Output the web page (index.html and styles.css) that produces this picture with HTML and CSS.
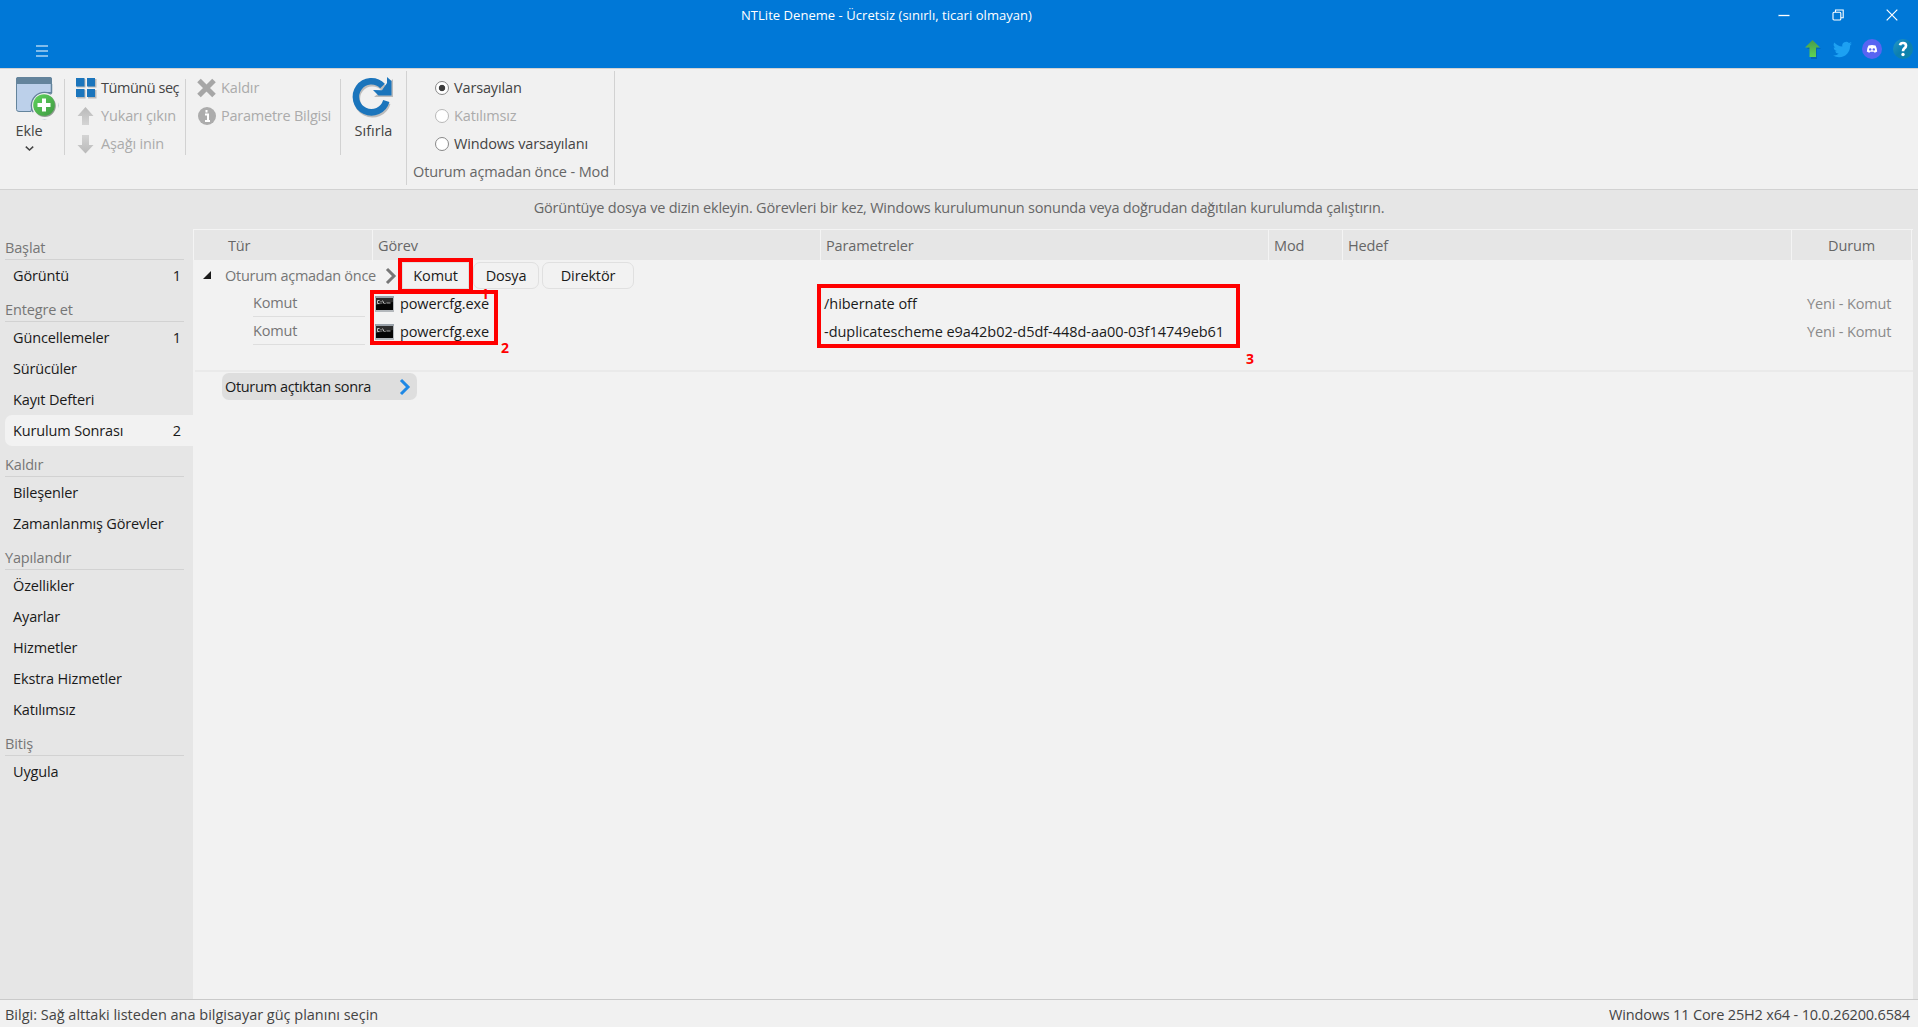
FILE: index.html
```html
<!DOCTYPE html>
<html lang="tr">
<head>
<meta charset="utf-8">
<title>NTLite</title>
<link rel="stylesheet" href="styles.css">
</head>
<body>
<svg width="0" height="0" class="defs">
  <defs>
    <linearGradient id="green" x1="0" y1="0" x2="1" y2="1"><stop offset="0" stop-color="#5fd35b"/><stop offset="1" stop-color="#3f9a43"/></linearGradient>
    <linearGradient id="arrowGreen" x1="0" y1="0" x2="0" y2="1"><stop offset="0" stop-color="#4a9a4c"/><stop offset="1" stop-color="#5fd451"/></linearGradient>
    <linearGradient id="teal" x1="0" y1="0" x2="1" y2="1"><stop offset="0" stop-color="#2698c4"/><stop offset="0.5" stop-color="#0c7fb0"/><stop offset="1" stop-color="#0f86a8"/></linearGradient>
    <linearGradient id="gray" x1="0" y1="0" x2="0" y2="1"><stop offset="0" stop-color="#b9b9b9"/><stop offset="1" stop-color="#d4d4d4"/></linearGradient>
    <linearGradient id="gray2" x1="0" y1="0" x2="0" y2="1"><stop offset="0" stop-color="#d4d4d4"/><stop offset="1" stop-color="#b9b9b9"/></linearGradient>
    <symbol id="cmd" viewBox="0 0 19 16">
      <rect width="19" height="16" fill="#b4b8bc"/>
      <rect width="19" height="2" fill="#9aa2aa"/>
      <rect x="1" y="2" width="17" height="12" fill="#050505"/>
      <path d="M1 2h17v4L1 9z" fill="#2c2c2c"/>
      <path d="M4.5 4.500H2.500V7.500H4.500M6 5v.8M6 6.700v.8M7.500 4.500l1.500 3M9.500 7.500h1" stroke="#e8e8e8" stroke-width=".8" fill="none"/>
      <path d="M11.500 7h4" stroke="#aaa" stroke-width="1"/>
    </symbol>
  </defs>
</svg>
<div class="app">
  <header class="titlebar">
    <div class="title-row">
      <span class="title">NTLite Deneme - Ücretsiz (sınırlı, ticari olmayan)</span>
      <div class="window-buttons">
        <svg width="12" height="12" viewBox="0 0 12 12"><path d="M.5 6.500h11" stroke="#fff" stroke-width="1.300"/></svg>
        <svg width="12" height="12" viewBox="0 0 12 12" fill="none" stroke="#fff" stroke-width="1.100"><rect x="1" y="3.200" width="7.800" height="7.800" rx="1"/><path d="M3.500 3V1h7.700v7.800H9"/></svg>
        <svg width="12" height="12" viewBox="0 0 12 12"><path d="M.7.700l10.600 10.600M11.300.7L.7 11.300" stroke="#fff" stroke-width="1.200"/></svg>
      </div>
    </div>
    <div class="menu-row">
      <svg width="12" height="12" viewBox="0 0 12 12"><path d="M0 1h12M0 6h12M0 11h12" stroke="#fff" stroke-width="1.200"/></svg>
      <div class="links">
        <svg class="link-up" width="16" height="19" viewBox="0 0 16 19"><path d="M8.500 2L16 9h-4v10H6V9H2z" fill="#075a9c" opacity=".6"/><path d="M7.500 0L15 7.500h-4V17H4.500V7.500H0z" fill="url(#arrowGreen)"/></svg>
        <svg class="link-bird" width="19" height="17" viewBox="0 2 24 20"><path fill="#1da1f2" d="M23.950 4.570a10 10 0 0 1-2.820.77 4.960 4.960 0 0 0 2.160-2.720c-.95.550-2 .950-3.120 1.180a4.920 4.920 0 0 0-8.380 4.480C7.690 8.100 4.070 6.130 1.640 3.160a4.920 4.920 0 0 0 1.520 6.570 4.900 4.900 0 0 1-2.230-.61v.06a4.920 4.920 0 0 0 3.950 4.830 5 5 0 0 1-2.210.08 4.940 4.940 0 0 0 4.600 3.420A9.870 9.870 0 0 1 0 19.540a13.990 13.990 0 0 0 7.550 2.210c9.050 0 14-7.500 14-13.990 0-.21 0-.42-.02-.63a9.940 9.940 0 0 0 2.420-2.560z"/></svg>
        <svg class="link-discord" width="20" height="20" viewBox="0 0 20 20"><circle cx="10" cy="10" r="10" fill="#5865f2"/><path d="M6.500 6.500Q10 5.500 13.500 6.500Q15 9 15.200 12.500Q14 13.600 12.500 13.800L12 12.800H8L7.500 13.800Q6 13.600 4.800 12.500Q5 9 6.500 6.500z" fill="#fff"/><circle cx="8.200" cy="10.400" r="1.200" fill="#5865f2"/><circle cx="11.800" cy="10.400" r="1.200" fill="#5865f2"/></svg>
        <svg width="20" height="20" viewBox="0 0 20 20"><circle cx="10" cy="10" r="10" fill="url(#teal)"/><path d="M7 6.300Q7.400 4 10 4Q13 4 13 6.700Q13 8.200 11.300 9.400Q10 10.300 10 12.300" fill="none" stroke="#fff" stroke-width="2.700"/><circle cx="10" cy="15.500" r="1.700" fill="#fff"/></svg>
      </div>
    </div>
  </header>

  <div class="ribbon">
    <div class="big-button add">
      <svg width="41" height="41" viewBox="0 0 41 41">
        <path d="M1.500.500h32q2 0 2 2v13H27l-10 8-2 11H3q-2.500 0-2.500-2V1.500z" fill="#bcd0ea" stroke="#64849c"/>
        <path d="M0 7V2Q0 0 2 0h32q2 0 2 2v5z" fill="#64849c"/>
        <path d="M35.500 7v10" stroke="#64849c" stroke-width="1.500"/>
        <circle cx="28.500" cy="28.500" r="13.800" fill="#64849c"/>
        <path d="M36.500 16L42 16V42H12V35.500H17z" fill="#f1f1f1"/>
        <circle cx="28.500" cy="28.500" r="12.500" fill="#f1f1f1"/>
        <circle cx="28.800" cy="29" r="11" fill="#8f9b90"/>
        <circle cx="28" cy="28" r="10.800" fill="url(#green)"/>
        <path d="M28 21.500v13M21.500 28h13" stroke="#fff" stroke-width="4"/>
      </svg>
      <span>Ekle</span>
      <svg class="caret" width="9" height="5" viewBox="0 0 9 5"><path d="M.8.600L4.500 4 8.200.600" fill="none" stroke="#444" stroke-width="1.500"/></svg>
    </div>
    <div class="sep"></div>
    <div class="commands select">
      <div class="command"><svg width="20" height="20" viewBox="0 0 20 20"><path d="M1 1h8.500v8.500H1zM12 1h8.500v8.500H12zM1 12h8.500v8.500H1zM12 12h8.500v8.500H12z" fill="#b9b9b9"/><path d="M0 0h8.500v8.500H0zM11 0h8v8.500h-8zM0 11h8.500v8H0zM11 11h8v8h-8z" fill="#1b75bc"/></svg><span class="tight">Tümünü seç</span></div>
      <div class="command off"><svg width="20" height="20" viewBox="0 0 20 20"><path d="M9.500 1L17.500 10H13v9H6v-9H1.500z" fill="url(#gray)"/></svg><span>Yukarı çıkın</span></div>
      <div class="command off"><svg width="20" height="20" viewBox="0 0 20 20"><path d="M9.500 19.500L17.500 11H13V1H6v10H1.500z" fill="url(#gray2)"/></svg><span>Aşağı inin</span></div>
    </div>
    <div class="sep"></div>
    <div class="commands info">
      <div class="command off"><svg width="20" height="20" viewBox="0 0 20 20"><path d="M2 2.500L17 17.500M17 2.500L2 17.500" stroke="#a6a6a6" stroke-width="5"/></svg><span>Kaldır</span></div>
      <div class="command off"><svg width="20" height="20" viewBox="0 0 20 20"><circle cx="10" cy="10" r="9" fill="#acacac"/><path d="M8 8.500h3V15M8 15h5M9.500 4v2.500" fill="none" stroke="#fff" stroke-width="2"/></svg><span class="param-info">Parametre Bilgisi</span></div>
    </div>
    <div class="sep"></div>
    <div class="big-button reset">
      <svg width="41" height="41" viewBox="0 0 41 41">
        <g transform="translate(1 1)" opacity=".3"><path d="M33.300 25A15.500 15.500 0 1 1 30 10.500" fill="none" stroke="#444" stroke-width="6.500"/><path d="M39 1v18H20l6-5z" fill="#444"/></g>
        <path d="M33.300 24A15.500 15.500 0 1 1 29.500 9" fill="none" stroke="#1b75bc" stroke-width="6.500"/>
        <path d="M34 0l4.500 4v14.500H25.500l-5.500-5.500 9 .2L34 6z" fill="#1b75bc"/>
      </svg>
      <span>Sıfırla</span>
    </div>
    <div class="mode">
      <div class="radio"><i class="on"></i>Varsayılan</div>
      <div class="radio off"><i></i>Katılımsız</div>
      <div class="radio"><i></i>Windows varsayılanı</div>
      <div class="caption">Oturum açmadan önce - Mod</div>
    </div>
  </div>

  <div class="hint">Görüntüye dosya ve dizin ekleyin. Görevleri bir kez, Windows kurulumunun sonunda veya doğrudan dağıtılan kurulumda çalıştırın.</div>

  <div class="main">
    <nav class="sidebar">
      <h2>Başlat</h2>
      <div class="item">Görüntü<span>1</span></div>
      <h2>Entegre et</h2>
      <div class="item">Güncellemeler<span>1</span></div>
      <div class="item">Sürücüler</div>
      <div class="item">Kayıt Defteri</div>
      <div class="item active">Kurulum Sonrası<span>2</span></div>
      <h2>Kaldır</h2>
      <div class="item">Bileşenler</div>
      <div class="item">Zamanlanmış Görevler</div>
      <h2>Yapılandır</h2>
      <div class="item">Özellikler</div>
      <div class="item">Ayarlar</div>
      <div class="item">Hizmetler</div>
      <div class="item">Ekstra Hizmetler</div>
      <div class="item">Katılımsız</div>
      <h2>Bitiş</h2>
      <div class="item">Uygula</div>
    </nav>

    <section class="table">
      <div class="head">
        <div>Tür</div><div>Görev</div><div>Parametreler</div><div>Mod</div><div>Hedef</div><div>Durum</div>
      </div>
      <div class="group-row">
        <svg class="expander" width="8" height="8" viewBox="0 0 8 8"><path d="M8 0v8H0z" fill="#1a1a1a"/></svg>
        <span class="group-name">Oturum açmadan önce</span>
        <svg class="chevron" width="12" height="18" viewBox="0 0 12 18"><path d="M2 2l7 7-7 7" fill="none" stroke="#777" stroke-width="3"/></svg>
        <div class="button komut">Komut<b class="mark mark-1">1</b></div>
        <div class="button dosya">Dosya</div>
        <div class="button direktor">Direktör</div>
      </div>
      <div class="tasks">
        <div class="task"><div class="type"><span>Komut</span></div><div class="file"><svg width="19" height="16"><use href="#cmd"/></svg>powercfg.exe</div><div class="params">/hibernate off</div><div class="state">Yeni - Komut</div></div>
        <div class="task"><div class="type"><span>Komut</span></div><div class="file"><svg width="19" height="16"><use href="#cmd"/></svg>powercfg.exe</div><div class="params">-duplicatescheme e9a42b02-d5df-448d-aa00-03f14749eb61</div><div class="state">Yeni - Komut</div></div>
        <div class="frame frame-2"></div><b class="mark mark-2">2</b>
        <div class="frame frame-3"></div><b class="mark mark-3">3</b>
      </div>
      <div class="after">Oturum açtıktan sonra<svg width="12" height="18" viewBox="0 0 12 18"><path d="M2 2l7 7-7 7" fill="none" stroke="#1e88e5" stroke-width="3"/></svg></div>
    </section>
  </div>

  <footer class="status"><span>Bilgi: Sağ alttaki listeden ana bilgisayar güç planını seçin</span><span>Windows 11 Core 25H2 x64 - 10.0.26200.6584</span></footer>
</div>
</body>
</html>
```
FILE: styles.css
```css
* { box-sizing: border-box; }
body {
  margin: 0;
  font: 14.5px/20px "Open Sans", "Noto Sans", sans-serif;
  letter-spacing: -0.15px;
  color: #1a1a1a;
  background: #e6e6e6;
  overflow: hidden;
  white-space: nowrap;
}
svg { display: block; flex: none; overflow: visible; }
.defs { position: absolute; }
.app { display: flex; flex-direction: column; height: 1027px; }

/* Title bar */
.titlebar { flex: none; height: 68px; background: #0078d7; }
.title-row { display: flex; height: 30px; align-items: center; }
.title { margin-left: 741px; font-size: 13px; letter-spacing: 0.04px; color: #fff; }
.window-buttons { display: flex; gap: 42px; margin: 0 20px 0 auto; }
.menu-row { display: flex; height: 38px; padding-left: 36px; align-items: center; }
.menu-row > svg { margin-top: 3px; }
.links { display: flex; align-items: center; margin: 0 5px 0 auto; }
.link-up { margin-right: 12px; }
.link-bird { margin-right: 10px; }
.link-discord { margin-right: 11px; }

/* Ribbon */
.ribbon {
  display: flex;
  flex: none;
  height: 122px;
  background: #f1f1f1;
  border-top: 1px solid #d2d2d2;
  border-bottom: 1px solid #d2d2d2;
  color: #444;
}
.sep { width: 1px; height: 76px; margin-top: 10px; background: #d2d2d2; }
.big-button { display: flex; flex-direction: column; align-items: center; padding-top: 8px; }
.big-button span { margin-top: 3px; }
.add { width: 64px; padding-right: 6px; }
.add > svg:first-child { margin-left: 14px; }
.caret { margin-top: 5px; }
.reset { width: 65px; letter-spacing: 0; }
.commands { padding-top: 5px; }
.select { width: 120px; padding-left: 11px; }
.info { width: 154px; padding-left: 11px; }
.command { display: flex; height: 28px; align-items: center; gap: 4px; }
.select .command { gap: 5px; }
.off { color: #ababab; }
.tight { letter-spacing: -0.47px; }
.param-info { letter-spacing: -0.24px; }
.mode {
  width: 209px;
  height: 114px;
  margin-top: 2px;
  padding: 3px 0 0 28px;
  border-left: 1px solid #d2d2d2;
  border-right: 1px solid #d2d2d2;
}
.radio { display: flex; height: 28px; align-items: center; gap: 5px; }
.radio i { width: 14px; height: 14px; border: 1px solid #888; border-radius: 50%; background: #fff; }
.radio.off i { border-color: #b8b8b8; }
.radio i.on { background: radial-gradient(circle, #3c3c3c 2.800px, #fff 3.600px); }
.caption { margin: 4px 0 0 -22px; color: #666; letter-spacing: -0.12px; }

.hint { flex: none; height: 39px; line-height: 35px; text-align: center; color: #666; letter-spacing: -0.21px; }

/* Sidebar */
.main { display: flex; flex: 1; min-height: 0; }
.sidebar { width: 193px; }
.sidebar h2 {
  height: 31px;
  margin: 0 9px 0 5px;
  padding-top: 9px;
  border-bottom: 1px solid #d2d2d2;
  font-size: inherit;
  font-weight: 400;
  color: #767676;
}
.item { display: flex; height: 31px; margin-left: 5px; padding: 0 12px 0 8px; align-items: center; justify-content: space-between; }
.item.active { background: #f2f2f2; border-radius: 7px 0 0 7px; }

/* Task table */
.table { width: 1720px; background: #f2f2f2; }
.head {
  display: grid;
  grid-template-columns: 179px 448px 448px 74px 449px 120px;
  height: 31px;
  background: #e6e6e6;
  border-top: 1px solid #f4f4f4;
  border-left: 1px solid #f4f4f4;
  color: #666;
  line-height: 32px;
}
.head div { padding-left: 5px; border-right: 1px solid #f4f4f4; }
.head div:first-child { padding-left: 34px; }
.head div:last-child { padding: 0; text-align: center; }
.group-row { display: flex; height: 30px; padding: 2px 0 1px; align-items: center; }
.expander { margin: -2px 14px 0 10px; }
.group-name { width: 160px; color: #767676; letter-spacing: -0.27px; }
.button {
  display: flex;
  height: 27px;
  align-items: center;
  justify-content: center;
  border: 1px solid #e0e0e0;
  border-radius: 7px;
}
.chevron { margin-right: 5px; }
.komut {
  position: relative;
  width: 67px;
  outline: 4px solid #f00;
}
.button.komut { border-radius: 0; margin: 0; }
.dosya { width: 66px; margin-left: 4px; }
.direktor { width: 92px; margin-left: 3px; }

.tasks { position: relative; height: 82px; margin-left: 2px; border-bottom: 2px solid #eaeaea; }
.task { display: flex; height: 28px; align-items: center; }
.type { width: 180px; padding-left: 58px; color: #767676; }
.type span { display: block; width: 112px; height: 26px; line-height: 23px; border-bottom: 1px solid #dedede; }
.file { display: flex; width: 449px; gap: 6px; align-items: center; letter-spacing: -0.11px; }
.params { width: 983px; letter-spacing: -0.04px; }
.state { color: #8a8a8a; }
.after {
  display: flex;
  width: 195px;
  height: 27px;
  margin: 1px 0 0 29px;
  padding: 0 6px 0 3px;
  align-items: center;
  justify-content: space-between;
  border-radius: 7px;
  background: #dedede;
  letter-spacing: -0.34px;
}

/* Numbered callouts over the table */
.frame { position: absolute; border: 4px solid #f00; }
.frame-2 { left: 175px; top: 0; width: 128px; height: 55px; }
.frame-3 { left: 622px; top: -6px; width: 423px; height: 64px; }
.mark { position: absolute; font-size: 14px; line-height: 14px; color: #f00; }
.mark-1 { left: 78px; top: 24px; }
.mark-2 { left: 306px; top: 51px; }
.mark-3 { left: 1051px; top: 62px; }

.status {
  display: flex;
  flex: none;
  height: 28px;
  padding: 5px 8px 0 5px;
  justify-content: space-between;
  background: #f1f1f1;
  border-top: 1px solid #cacaca;
  color: #444;
  letter-spacing: -0.01px;
}
.status span:last-child { letter-spacing: -0.17px; }
```
